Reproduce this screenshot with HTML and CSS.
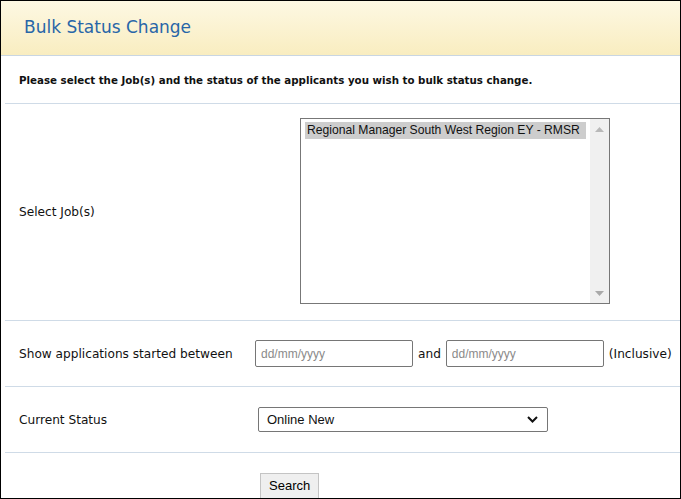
FILE: index.html
```html
<!DOCTYPE html>
<html lang="en">
<head>
    <meta charset="UTF-8">
    <title>Bulk Status Change</title>
    <link rel="stylesheet" href="styles.css">
</head>
<body>
<div id="frame">
    <div class="head"><h1>Bulk Status Change</h1></div>
    <div class="form">
        <div class="row intro">Please select the Job(s) and the status of the applicants you wish to bulk status change.</div>
        <div class="row jobs">
            <label class="lbl">Select Job(s)</label>
            <div class="listbox">
                <div class="opts">
                    <div class="opt sel">Regional Manager South West Region EY - RMSR</div>
                </div>
                <div class="sbar">
                    <svg width="9" height="5" viewBox="0 0 9 5"><path d="M0 5 L4.5 0 L9 5 Z" fill="#b8b8b8"/></svg>
                    <svg width="9" height="5" viewBox="0 0 9 5"><path d="M0 0 L4.5 5 L9 0 Z" fill="#a9a9a9"/></svg>
                </div>
            </div>
        </div>
        <div class="row dates">
            <label class="lbl">Show applications started between</label>
            <input class="date" type="text" placeholder="dd/mm/yyyy">
            <span class="txt">and</span>
            <input class="date" type="text" placeholder="dd/mm/yyyy">
            <span class="txt">(Inclusive)</span>
        </div>
        <div class="row status">
            <label class="lbl">Current Status</label>
            <div class="pick">
                <span>Online New</span>
                <svg width="11" height="7" viewBox="0 0 11 7"><path d="M1 1 L5.5 5.5 L10 1" fill="none" stroke="#111" stroke-width="2"/></svg>
            </div>
        </div>
        <div class="row go">
            <button class="btn">Search</button>
        </div>
    </div>
</div>
</body>
</html>
```

FILE: styles.css
```css
html,body{margin:0;padding:0;background:#fff;}
#frame{width:681px;height:499px;box-sizing:border-box;border:1px solid #000;overflow:hidden;font-family:"DejaVu Sans",Verdana,sans-serif;color:#111;}
.head{height:54px;border-bottom:1px solid #c9d6e2;background:linear-gradient(#fdf8e3,#f9edc0);display:flex;align-items:center;}
.head h1{margin:0 0 2px 23px;font-size:17px;font-weight:normal;color:#2866a8;}
.form{padding-left:4px;}
.row{border-bottom:1px solid #cfdbe7;display:flex;align-items:center;padding-left:14px;}
.intro{height:47px;font-size:10.27px;font-weight:bold;}
.lbl{font-size:12.15px;width:236px;flex:none;}
.jobs{height:216px;}
.listbox{margin-left:45px;align-self:flex-start;margin-top:14px;width:310px;height:186px;border:1px solid #777;display:flex;box-sizing:border-box;}
.opts{flex:1;padding:3px 4px;}
.opt{font:12.15px "Liberation Sans",Arial,sans-serif;padding:1px 2px 2px;}
.opt.sel{background:#cdcdcd;}
.sbar{width:19px;background:#f0f0f0;display:flex;flex-direction:column;justify-content:space-between;align-items:center;padding:8px 0 7px;}
.dates{height:65px;}
.date{width:158px;height:27px;box-sizing:border-box;border:1px solid #767676;border-radius:2px;padding:0 5px;font:12px "Liberation Sans",Arial,sans-serif;margin:0;}
.date::placeholder{color:#8a8a8a;}
.txt{font-size:12.15px;margin:0 5px;}
.status{height:65px;}
.pick{margin-left:3px;width:290px;height:25px;box-sizing:border-box;border:1px solid #767676;border-radius:2px;display:flex;align-items:center;justify-content:space-between;padding:0 9px 0 8px;font:13px "Liberation Sans",Arial,sans-serif;}
.go{border-bottom:none;height:50px;align-items:flex-start;padding-left:255px;padding-top:20px;box-sizing:border-box;}
.btn{font:13px "Liberation Sans",Arial,sans-serif;background:#efefef;border:1px solid #c4c4c4;padding:4px 8px 6px;margin:0;}
```
